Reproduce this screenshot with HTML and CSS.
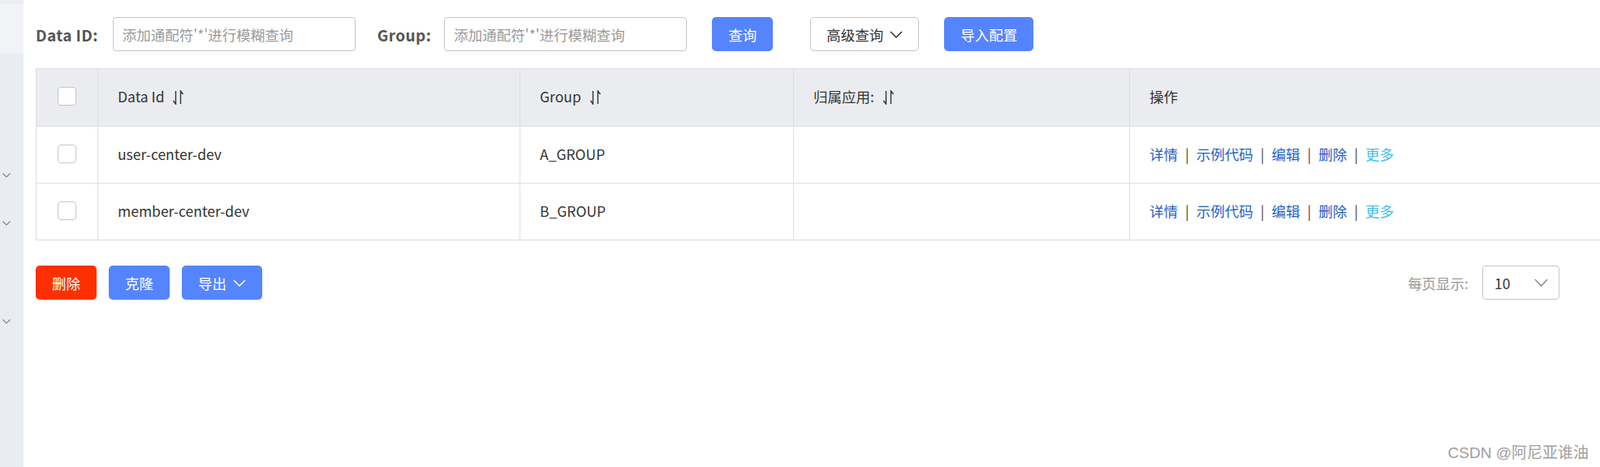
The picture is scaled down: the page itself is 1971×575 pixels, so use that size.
FILE: index.html
```html
<!DOCTYPE html>
<html lang="zh-CN">
<head>
    <meta charset="UTF-8">
    <meta name="viewport" content="width=device-width, initial-scale=1.0">
    <title>配置列表</title>

    <link rel="stylesheet" href="styles.css">
</head>
<body>

<div class="layout">
    <div class="sidebar">
        <div class="sidebar-band"></div>
        <div class="sidebar-top"></div>
        <div class="menu-arrow first"><svg width="10" height="6" viewBox="0 0 10 6"><polyline points="0.5,0.5 5,5 9.5,0.5"/></svg></div>
        <div class="menu-arrow second"><svg width="10" height="6" viewBox="0 0 10 6"><polyline points="0.5,0.5 5,5 9.5,0.5"/></svg></div>
        <div class="menu-arrow third"><svg width="10" height="6" viewBox="0 0 10 6"><polyline points="0.5,0.5 5,5 9.5,0.5"/></svg></div>
    </div>

    <div class="main">
        <div class="toolbar">
            <span class="field-label">Data ID:</span>
            <input type="text" class="search-input" placeholder="添加通配符'*'进行模糊查询">
            <span class="field-label group-label">Group:</span>
            <input type="text" class="search-input" placeholder="添加通配符'*'进行模糊查询">
            <button class="btn btn-primary btn-query">查询</button>
            <button class="btn btn-normal btn-advanced">高级查询
                <svg class="arrow" width="16" height="9" viewBox="0 0 16 9"><polyline points="1,1 8,8 15,1"/></svg>
            </button>
            <button class="btn btn-primary btn-import">导入配置</button>
        </div>

        <table class="config-table">
            <colgroup>
                <col class="col-check">
                <col class="col-id">
                <col class="col-group">
                <col class="col-app">
                <col>
            </colgroup>
            <thead>
                <tr>
                    <th class="check-cell"><span class="checkbox"></span></th>
                    <th>Data Id <svg class="sort" width="15" height="18" viewBox="0 0 15 18"><path d="M4.5 1 V17 L1.5 13"/><path d="M10.5 17 V1 L13.5 5"/></svg></th>
                    <th>Group <svg class="sort" width="15" height="18" viewBox="0 0 15 18"><path d="M4.5 1 V17 L1.5 13"/><path d="M10.5 17 V1 L13.5 5"/></svg></th>
                    <th>归属应用: <svg class="sort" width="15" height="18" viewBox="0 0 15 18"><path d="M4.5 1 V17 L1.5 13"/><path d="M10.5 17 V1 L13.5 5"/></svg></th>
                    <th>操作</th>
                </tr>
            </thead>
            <tbody>
                <tr>
                    <td class="check-cell"><span class="checkbox"></span></td>
                    <td>user-center-dev</td>
                    <td>A_GROUP</td>
                    <td></td>
                    <td class="actions">
                        <a>详情</a><span class="sep">|</span><a>示例代码</a><span class="sep">|</span><a>编辑</a><span class="sep">|</span><a>删除</a><span class="sep">|</span><a class="more">更多</a>
                    </td>
                </tr>
                <tr>
                    <td class="check-cell"><span class="checkbox"></span></td>
                    <td>member-center-dev</td>
                    <td>B_GROUP</td>
                    <td></td>
                    <td class="actions">
                        <a>详情</a><span class="sep">|</span><a>示例代码</a><span class="sep">|</span><a>编辑</a><span class="sep">|</span><a>删除</a><span class="sep">|</span><a class="more">更多</a>
                    </td>
                </tr>
            </tbody>
        </table>

        <div class="footer-bar">
            <div class="batch-actions">
                <button class="btn btn-danger">删除</button>
                <button class="btn btn-primary">克隆</button>
                <button class="btn btn-primary btn-export">导出
                    <svg class="arrow" width="16" height="9" viewBox="0 0 16 9"><polyline points="1,1 8,8 15,1"/></svg>
                </button>
            </div>
            <div class="page-size">
                <span class="page-size-label">每页显示:</span>
                <div class="select">
                    <span>10</span>
                    <svg width="17" height="10" viewBox="0 0 17 10"><polyline points="1,1 8.5,9 16,1"/></svg>
                </div>
            </div>
        </div>
    </div>
</div>

<div class="watermark">CSDN @阿尼亚谁油</div>

</body>
</html>
```

FILE: styles.css
```css
body {
    margin: 0;
    background-color: #fff;
    font-family: "Noto Sans CJK SC", "Noto Sans", sans-serif;
    font-size: 17.5px;
    color: #333;
}
.layout {
    display: flex;
    min-height: 575px;
}
.sidebar {
    width: 29px;
    flex-shrink: 0;
    background-color: #e9ecf0;
}
.sidebar-band {
    height: 5px;
    background-color: #eceef2;
}
.sidebar-top {
    height: 61px;
    background-color: #f2f3f6;
}
.menu-arrow {
    display: flex;
    padding-left: 3px;
}
.menu-arrow svg {
    fill: none;
    stroke: #7c8594;
    stroke-width: 1.1;
}
.menu-arrow.first { margin-top: 147px; }
.menu-arrow.second { margin-top: 53px; }
.menu-arrow.third { margin-top: 115px; }

.main {
    flex: 1;
    padding: 21px 0 0 15px;
}
.toolbar {
    display: flex;
    align-items: center;
    height: 42px;
}
.field-label {
    font-size: 19px;
    font-weight: bold;
    letter-spacing: 0.4px;
    color: #555;
    margin-right: 18px;
}
.group-label {
    margin-left: 27px;
    margin-right: 16px;
}
.search-input {
    box-sizing: border-box;
    width: 299px;
    height: 42px;
    padding: 0 11px;
    border: 1px solid #c4c6cf;
    border-radius: 4px;
    font-family: inherit;
    font-size: 17.5px;
    color: #333;
    outline: none;
}
.search-input::placeholder {
    color: #9a9a9a;
}
.btn {
    box-sizing: border-box;
    height: 42px;
    padding: 0 19px;
    border: 1px solid transparent;
    border-radius: 5px;
    font-family: inherit;
    font-size: 17.5px;
    display: inline-flex;
    align-items: center;
    cursor: pointer;
}
.btn .arrow {
    margin-left: 8px;
    fill: none;
    stroke: currentColor;
    stroke-width: 1.5;
}
.btn-primary {
    background-color: #5584ff;
    color: #fff;
}
.btn-danger {
    background-color: #ff3000;
    color: #fff;
}
.btn-normal {
    background-color: #fff;
    border-color: #c4c6cf;
    color: #333;
}
.btn-query { margin-left: 31px; }
.btn-advanced { margin-left: 46px; }
.btn-import { margin-left: 31px; }

.config-table {
    width: 100%;
    margin-top: 21px;
    border-collapse: collapse;
    table-layout: fixed;
}
.col-check { width: 76px; }
.col-id { width: 520px; }
.col-group { width: 337px; }
.col-app { width: 414px; }
.config-table th,
.config-table td {
    border: 1px solid #dcdee3;
    padding: 0 24px 3px;
    text-align: left;
    font-weight: normal;
    color: #333;
    white-space: nowrap;
}
.config-table th:last-child,
.config-table td:last-child {
    border-right: none;
}
.config-table th {
    height: 67px;
    background-color: #ebecf0;
}
.config-table td {
    height: 66px;
}
.config-table .check-cell {
    padding: 0 0 3px;
    text-align: center;
}
.checkbox {
    display: inline-block;
    box-sizing: border-box;
    width: 23px;
    height: 23px;
    margin-bottom: 2px;
    border: 1px solid #c4c6cf;
    border-radius: 4px;
    background-color: #fff;
    vertical-align: middle;
}
.sort {
    margin-left: 6px;
    vertical-align: -3px;
    fill: none;
    stroke: #333;
    stroke-width: 1.4;
}
.actions a {
    color: #1f5fc8;
}
.actions a.more {
    color: #40bfe8;
}
.actions .sep {
    margin: 0 9px;
    color: #4a3f3a;
}

.footer-bar {
    display: flex;
    justify-content: space-between;
    align-items: center;
    margin-top: 31px;
    padding-right: 50px;
}
.batch-actions {
    display: flex;
    gap: 15px;
}
.page-size {
    display: flex;
    align-items: center;
}
.page-size-label {
    color: #999;
    margin-right: 17px;
}
.select {
    box-sizing: border-box;
    width: 95px;
    height: 42px;
    padding: 0 13px 0 14px;
    border: 1px solid #c4c6cf;
    border-radius: 4px;
    display: flex;
    align-items: center;
    justify-content: space-between;
    color: #333;
}
.select svg {
    fill: none;
    stroke: #888;
    stroke-width: 1.5;
}
.watermark {
    position: absolute;
    right: 14px;
    bottom: 6px;
    font-family: "Liberation Sans", "Noto Sans CJK SC", sans-serif;
    font-size: 19px;
    color: #9e9e9e;
}
```
